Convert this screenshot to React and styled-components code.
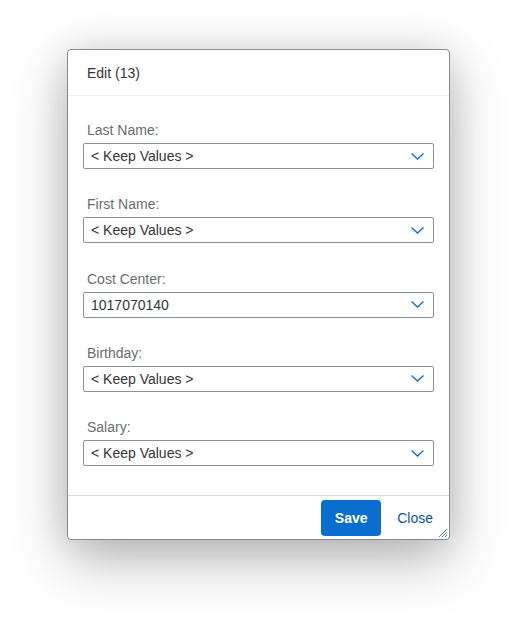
import React from 'react'
import styled, { createGlobalStyle } from "styled-components"

const GlobalStyle = createGlobalStyle`
  html, body {
    margin: 0;
    background: #ffffff;
  }
  body {
    font-family: "Liberation Sans", Arial, sans-serif;
  }
  * {
    box-sizing: border-box;
  }
`;

const fields = [
  { label: "Last Name:", value: "< Keep Values >" },
  { label: "First Name:", value: "< Keep Values >" },
  { label: "Cost Center:", value: "1017070140" },
  { label: "Birthday:", value: "< Keep Values >" },
  { label: "Salary:", value: "< Keep Values >" },
];

const Chevron = () => (
  <svg width="13" height="7" viewBox="0 0 13 7">
    <polyline points="0.5,0.5 6.5,6 12.5,0.5" fill="none" stroke="#0a6ed1" strokeWidth="1.3" />
  </svg>
);

const Grip = () => (
  <svg width="10" height="10" viewBox="0 0 10 10">
    <line x1="9" y1="1" x2="1" y2="9" stroke="#4a7fb5" strokeWidth="1" />
    <line x1="9" y1="4" x2="4" y2="9" stroke="#4a7fb5" strokeWidth="1" />
    <line x1="9" y1="7" x2="7" y2="9" stroke="#4a7fb5" strokeWidth="1" />
  </svg>
);

const App = () => {
  return (
    <Page>
      <GlobalStyle />
      <Dialog>
        <Header>Edit (13)</Header>
        <Content>
          {fields.map((f) => (
            <Field key={f.label}>
              <Label>{f.label}</Label>
              <Select>
                <span>{f.value}</span>
                <Chevron />
              </Select>
            </Field>
          ))}
        </Content>
        <Footer>
          <Button $primary>Save</Button>
          <Button>Close</Button>
        </Footer>
        <Resize>
          <Grip />
        </Resize>
      </Dialog>
    </Page>
  );
}

const Page = styled.div`
  padding: 49px 0 0 67px;
  height: 640px;
`;

const Dialog = styled.div`
  position: relative;
  width: 383px;
  display: flex;
  flex-direction: column;
  background: #ffffff;
  border: 1px solid #8a8b8c;
  border-radius: 4px;
  box-shadow: 0 20px 56px rgba(0, 0, 0, 0.28), 0 0 36px rgba(0, 0, 0, 0.1);
`;

const Header = styled.div`
  height: 46px;
  padding: 0 19px;
  display: flex;
  align-items: center;
  border-bottom: 1px solid #eeeeee;
  font-size: 14px;
  color: #32363a;
`;

const Content = styled.div`
  display: flex;
  flex-direction: column;
  gap: 27.25px;
  padding: 26px 15px 29px 15px;
`;

const Field = styled.div`
  display: flex;
  flex-direction: column;
`;

const Label = styled.div`
  font-size: 14px;
  line-height: 16px;
  padding-left: 4px;
  margin-bottom: 5px;
  color: #6a6d70;
`;

const Select = styled.div`
  height: 26px;
  display: flex;
  align-items: center;
  justify-content: space-between;
  padding: 0 9px 0 7px;
  border: 1px solid #89919a;
  border-radius: 2px;
  font-size: 14px;
  color: #32363a;
`;

const Footer = styled.div`
  height: 44px;
  display: flex;
  align-items: center;
  justify-content: flex-end;
  gap: 8px;
  padding: 0 8px 0 0;
  border-top: 1px solid #d9d9d9;
`;

const Button = styled.button`
  height: 36px;
  padding: 0 ${(p) => (p.$primary ? "13px" : "8px")};
  min-width: ${(p) => (p.$primary ? "60px" : "auto")};
  border: none;
  border-radius: 4px;
  font-family: "Liberation Sans", Arial, sans-serif;
  font-size: 14px;
  font-weight: ${(p) => (p.$primary ? "bold" : "normal")};
  color: ${(p) => (p.$primary ? "#ffffff" : "#0854a0")};
  background: ${(p) => (p.$primary ? "#0a6ed1" : "transparent")};
  cursor: pointer;
`;

const Resize = styled.div`
  position: absolute;
  right: 1px;
  bottom: 1px;
  width: 10px;
  height: 10px;
  display: flex;
`;

export default App
